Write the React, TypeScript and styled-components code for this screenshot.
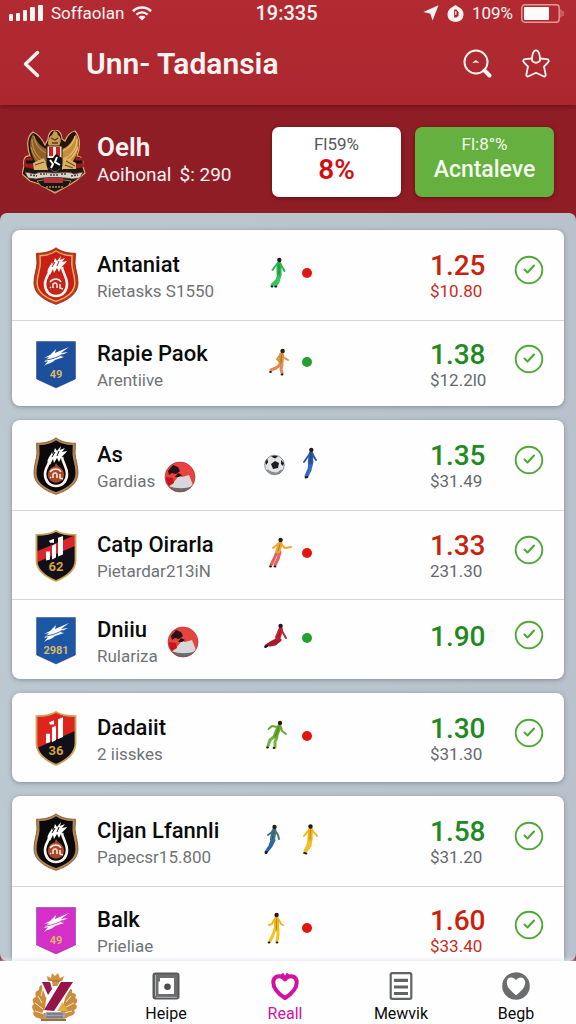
import React from 'react';
import styled, { createGlobalStyle } from 'styled-components';

const GlobalStyle = createGlobalStyle`
  *, *::before, *::after { box-sizing: border-box; }
  body { margin: 0; background: #8f1d26; font-family: Roboto, "Liberation Sans", sans-serif; }
  button { font-family: inherit; border: 0; padding: 0; background: none; cursor: pointer; }
  svg { display: block; }
`;

const Shell = styled.div`
  display: flex;
  flex-direction: column;
  height: 100vh;
  background: #8f1d26;
  color: #0b0b0c;
`;

const TopBar = styled.header`
  flex: none;
  background: linear-gradient(#b22a32, #ab272e);
  color: #fff3f1;
  box-shadow: 0 1px 5px rgba(70, 0, 8, 0.6);
`;

const StatusBar = styled.div`
  display: grid;
  grid-template-columns: 1fr auto 1fr;
  align-items: center;
  height: 26px;
  padding: 0 12px 0 9px;
  font-size: 17px;
  line-height: 24px;
`;

const StatusGroup = styled.div<{ $end?: boolean }>`
  display: flex;
  align-items: center;
  gap: 8px;
  justify-content: ${(p) => (p.$end ? 'flex-end' : 'flex-start')};
`;

const Clock = styled.time`
  font-size: 20px;
  font-weight: 500;
`;

const TitleRow = styled.div`
  display: flex;
  align-items: center;
  height: 79px;
  padding: 0 26px 4px 22px;
`;

const IconButton = styled.button`
  display: grid;
  place-items: center;
  flex: none;
  color: inherit;
`;

const Title = styled.h1`
  flex: 1;
  margin: 0 0 0 44px;
  font-size: 30px;
  line-height: 36px;
  font-weight: 600;
  white-space: nowrap;
`;

const Actions = styled.div`
  display: flex;
  gap: 30px;
`;

const Hero = styled.section`
  flex: none;
  display: flex;
  align-items: center;
  gap: 14px;
  height: 108px;
  padding: 6px 22px 0 22px;
  color: #fff3f1;
`;

const HeroText = styled.div`
  flex: 1;
  min-width: 0;
  margin-left: -3px;
  padding-bottom: 3px;
  white-space: nowrap;
`;

const HeroName = styled.h2`
  margin: 0;
  font-size: 26px;
  line-height: 28px;
  font-weight: 600;
`;

const HeroMeta = styled.p`
  display: flex;
  gap: 8px;
  margin: 0;
  font-size: 19px;
  line-height: 28px;
`;

const Tile = styled.button<{ $green?: boolean }>`
  flex: none;
  display: flex;
  flex-direction: column;
  align-items: center;
  justify-content: center;
  width: ${(p) => (p.$green ? '139px' : '129px')};
  height: 70px;
  padding-bottom: 4px;
  border-radius: 7px;
  background: ${(p) => (p.$green ? '#66b040' : '#ffffff')};
  color: ${(p) => (p.$green ? '#f4fbef' : '#d00f12')};
  box-shadow: 0 1px 4px rgba(60, 0, 6, 0.55);
`;

const TileTop = styled.span<{ $muted?: boolean }>`
  font-size: 17px;
  line-height: 20px;
  color: ${(p) => (p.$muted ? '#55585c' : 'inherit')};
`;

const TileMain = styled.span<{ $big?: boolean }>`
  font-size: ${(p) => (p.$big ? '28px' : '23px')};
  line-height: 32px;
  font-weight: ${(p) => (p.$big ? 600 : 500)};
`;

const Main = styled.main`
  flex: 1;
  min-height: 0;
  display: flex;
  flex-direction: column;
  gap: 14px;
  padding: 17px 12px;
  overflow-y: auto;
  scrollbar-width: none;
  border-radius: 7px;
  background: linear-gradient(90deg, #bcc8d0, #b9c5cd 50%, #b8c1cc);
`;

const Card = styled.ul`
  flex: none;
  margin: 0;
  padding: 0;
  list-style: none;
  background: #fefefe;
  border-radius: 8px;
  box-shadow: 0 1px 4px rgba(70, 85, 100, 0.5);
`;

const sizes = { tall: 90, medium: 89, regular: 86, compact: 80 };
type Size = keyof typeof sizes;

const Row = styled.li<{ $size: Size }>`
  display: grid;
  grid-template-columns: 48px minmax(0, 152fr) minmax(0, 150fr) 68px 30px;
  column-gap: 16px;
  align-items: center;
  min-height: ${(p) => sizes[p.$size]}px;
  padding: 0 20px;
  & + & { border-top: 1px solid #d3d5d8; }
`;

const CrestSlot = styled.div`
  display: grid;
  place-items: center;
  padding-top: 2px;
`;

const Team = styled.div<{ $center?: boolean }>`
  display: flex;
  align-items: ${(p) => (p.$center ? 'center' : 'flex-end')};
  gap: 9px;
  padding: 4px 0 0 1px;
  white-space: nowrap;
`;

const Name = styled.h3`
  margin: 0;
  font-size: 22px;
  line-height: 28px;
  font-weight: 500;
  color: #0b0b0c;
`;

const Sub = styled.p`
  margin: 0;
  font-size: 17px;
  line-height: 24px;
  color: #707376;
`;

const Players = styled.div`
  display: grid;
  grid-template-columns: 28px auto;
  justify-content: start;
  align-items: center;
  column-gap: 10px;
  padding-bottom: 4px;
`;

const Dot = styled.span<{ $tone: Tone }>`
  width: 10px;
  height: 10px;
  border-radius: 50%;
  background: ${(p) => (p.$tone === 'red' ? '#e0160f' : '#23a02d')};
`;

const Quote = styled.div<{ $single?: boolean }>`
  padding: ${(p) => (p.$single ? '0 0 6px' : '6px 0 0')};
  white-space: nowrap;
`;

const Odds = styled.strong<{ $tone: Tone }>`
  display: block;
  font-size: 28px;
  line-height: 26px;
  font-weight: 500;
  color: ${(p) => (p.$tone === 'red' ? '#cc1f0d' : '#208a1e')};
`;

const Price = styled.span<{ $tone: Tone | 'grey' }>`
  display: block;
  font-size: 17px;
  line-height: 24px;
  color: ${(p) => (p.$tone === 'red' ? '#c92a1c' : '#66696c')};
`;

const CheckButton = styled(IconButton)`
  margin-bottom: 10px;
  color: #4fa838;
`;

const Nav = styled.nav`
  flex: none;
  display: grid;
  grid-template-columns: 108fr 116fr 122fr 110fr 120fr;
  height: 63px;
  background: #fefefe;
  box-shadow: 0 -1px 5px rgba(225, 230, 236, 0.95);
  position: relative;
`;

const NavLink = styled.a<{ $active?: boolean }>`
  display: flex;
  flex-direction: column;
  align-items: center;
  padding-top: 11px;
  gap: 4px;
  text-decoration: none;
  font-size: 16px;
  line-height: 20px;
  color: ${(p) => (p.$active ? '#d012a4' : '#0b0b0c')};
`;

type Tone = 'red' | 'green';

/* ---------- Icons ---------- */

const SignalIcon = () => (
  <svg width="34" height="16" viewBox="0 0 34 16" fill="currentColor">
    <rect x="0" y="9" width="4" height="7" rx="1" />
    <rect x="7" y="8" width="4" height="8" rx="1" />
    <rect x="14" y="5" width="4" height="11" rx="1" />
    <rect x="21" y="2" width="5" height="14" rx="1" />
    <rect x="29" y="0" width="5" height="16" rx="1" />
  </svg>
);

const WifiIcon = () => (
  <svg width="20" height="15" viewBox="0 0 20 15" fill="none" stroke="currentColor" strokeWidth="2.6">
    <path d="M1 5.2C6 .3 14 .3 19 5.2" />
    <path d="M4.4 8.6c3.2-3 8-3 11.2 0" strokeWidth="2.2" />
    <path d="M10 14.6 6.4 11c2-1.8 5.200-1.800 7.200 0z" fill="currentColor" stroke="none" />
  </svg>
);

const LocationIcon = () => (
  <svg width="16" height="16" viewBox="0 0 16 16" fill="currentColor">
    <path d="M15.500 0.300 0.300 7l6.900 1.500L9.600 15.500z" />
  </svg>
);

const AlarmIcon = () => (
  <svg width="17" height="17" viewBox="0 0 17 17">
    <path d="M5.500 2 8.500 0l3 2c3 1.300 5 4 5 7.200 0 4.500-3 7.600-8 7.600S.5 13.700.5 9.200C.5 6 2.500 3.300 5.500 2z" fill="currentColor" />
    <path d="M7.200 4.600h2.300l2 2.600v3.600L9.300 12.600H7.200z" fill="#a3242b" />
    <path d="M8.800 6.200v3.600" stroke="currentColor" strokeWidth="1.300" />
  </svg>
);

const BatteryIcon = () => (
  <svg width="43" height="19" viewBox="0 0 43 19">
    <rect x="0.800" y="0.800" width="37.400" height="17.400" rx="3" fill="none" stroke="#e79a9a" strokeWidth="1.400" />
    <rect x="3" y="3" width="25" height="13" rx="1" fill="#fffafa" />
    <path d="M40 5.500v8M42 7v5" stroke="#d97e80" strokeWidth="1.200" />
  </svg>
);

const BackIcon = () => (
  <svg width="20" height="28" viewBox="0 0 20 28" fill="none" stroke="currentColor" strokeWidth="3.400" strokeLinecap="round" strokeLinejoin="round">
    <path d="M15.500 2.500 3.500 14l12 11.500" />
  </svg>
);

const SearchIcon = () => (
  <svg width="29" height="29" viewBox="0 0 29 29" fill="none" stroke="currentColor">
    <circle cx="13" cy="13" r="11.500" strokeWidth="2" />
    <path d="m21.500 21.500 5 5" strokeWidth="4" strokeLinecap="round" />
    <path d="M9.500 14.200c.4-1.600 1.600-1.700 2-2.300.700-1 2.300-.8 2.500.3 1 .1 1.700.8 1.800 2-1.800-.8-4.300-.8-6.300 0z" fill="currentColor" stroke="none" />
  </svg>
);

const StarIcon = () => (
  <svg width="28" height="29" viewBox="0 0 28 29" fill="none" stroke="currentColor" strokeWidth="1.800" strokeLinejoin="round" strokeLinecap="round">
    <path d="M10 11C9.800 5.500 11.500 1.300 14 1.300S18.200 5.500 18 11" />
    <path d="M9.800 9.500 3.200 10.200c-2 .2-2.600 1.800-1.200 3.200l4 4.200-1.600 7.600c-.4 1.800.6 2.800 2.200 2l7.400-3.400 7.400 3.400c1.600.8 2.600-.2 2.200-2L22 17.600l4-4.200c1.400-1.400.8-3-1.200-3.200L18.200 9.500" />
    <path d="M10 11.500c2 3 6 3 8 0" />
  </svg>
);

const CheckIcon = () => (
  <svg width="30" height="30" viewBox="0 0 30 30" fill="none" stroke="currentColor" strokeLinecap="round" strokeLinejoin="round">
    <circle cx="15" cy="15" r="13.300" strokeWidth="1.900" />
    <path d="m10.500 14.600 3 2.900 6.500-7" strokeWidth="2.100" />
  </svg>
);

const FrameIcon = () => (
  <svg width="28" height="28" viewBox="0 0 28 28">
    <rect x="1.500" y="1.500" width="25" height="25" rx="2" fill="#6d6e70" stroke="#58595b" strokeWidth="2" />
    <path d="M3.500 3v21M4 25.300H25" stroke="#b5b6b8" strokeWidth="1" />
    <path d="M8 6h14v16H6.500V9.500H8z" fill="#fff" />
    <circle cx="15.500" cy="14.800" r="3.300" fill="#4c4d4f" />
  </svg>
);

const HeartIcon = () => (
  <svg width="28" height="28" viewBox="0 0 28 28">
    <path d="M14 26C6 21 2.300 16 2.300 10.500c0-6.500 7-8.500 11.700-3.200 4.700-5.300 11.700-3.300 11.700 3.200C25.700 16 22 21 14 26z" fill="#fff" stroke="#d012a4" strokeWidth="4" strokeLinejoin="round" />
    <path d="M11 1.500 14 6l3-4.500" fill="none" stroke="#d012a4" strokeWidth="2.600" />
  </svg>
);

const ListIcon = () => (
  <svg width="24" height="28" viewBox="0 0 24 28" fill="none" stroke="#626365">
    <rect x="1.700" y="1.200" width="20.600" height="25.600" rx="1.500" strokeWidth="2.200" />
    <path d="M5 8.300h14M5 15h14M5 21.500h14" strokeWidth="3.200" />
  </svg>
);

const HeartBadgeIcon = () => (
  <svg width="30" height="28" viewBox="0 0 30 29">
    <circle cx="15" cy="14.500" r="14.300" fill="#6b6c6e" />
    <path d="M15 24C8 18.500 5.500 15 5.500 10.500c0-5.300 6.500-6.800 9.500-2 3-4.800 9.500-3.300 9.500 2C24.500 15 22 18.500 15 24z" fill="#fefefe" />
  </svg>
);

/* ---------- Emblems ---------- */

const GarudaEmblem = () => (
  <svg width="64" height="64" viewBox="0 0 64 64" role="img" aria-label="Club emblem">
    <path d="M11 2C4 7 5 18 8 26c-6-1-7 5-6 10l-2 8 8 7 9 3 16 9 16-9 6-4 8-7-2-6c1-6-1-11-6-11 3-8 4-18-2-25-5 1-8 5-10 10L40 9c0-5-3-9-7-9s-7 4-7 9l-3 6C20 9 16 4 11 2z" fill="#24160f" stroke="#e2a86b" strokeWidth="1.200" />
    <path d="M11 4C6 12 8 24 15 34l10 6V19C18 17 14 10 11 4z" fill="#8d5f2a" />
    <path d="M10 9c0 10 5 19 14 23M9 17c2 9 7 15 14 19M12 6c1 8 6 14 12 17" stroke="#c4913f" strokeWidth="1.100" fill="none" />
    <path d="M54 4c5 8 3 20-5 30l-9 6V19c7-2 11-9 14-15z" fill="#c58f3b" />
    <path d="M55 9c0 9-5 17-14 20M56 17c-3 8-7 13-14 16M53 6c-1 7-6 12-12 15" stroke="#e8c26e" strokeWidth="1.300" fill="none" />
    <path d="M27 16c-2-3-1-9 3-11l2-4 3 1 1 3c4 2 3 8 1 11z" fill="#c69a4f" />
    <path d="M29 8l4 2 3-2M30 13h6" stroke="#5c3b16" strokeWidth="1.300" fill="none" />
    <path d="M3 28l7-1 3 12-11-2zM61 28l-7-1-3 12 11-2z" fill="#9c1b1e" />
    <path d="M4 32h8M52 32h8" stroke="#111" strokeWidth="3" />
    <path d="M25 16h15v21l-7 6-8-6z" fill="#f4ead9" stroke="#3a1a12" />
    <path d="M27 17h4v9h-4zM34 17h4v9h-4z" fill="#c3202a" />
    <path d="M25 28h6l3-4 6 4v9l-7 5-8-5z" fill="#101114" />
    <path d="M28 30l3 4-2 4M35 27l-2 5 5 3" stroke="#fff" strokeWidth="2" fill="none" />
    <path d="M11 33l11-5 4 12H12zM54 33l-12-6-2 12h14z" fill="#d9b468" />
    <path d="M13 35l9-3M44 31l9 5M43 35l8 3" stroke="#6e4a1b" strokeWidth="1.200" />
    <path d="M3 42l10 2c6-3 10-1 19-1s14-2 20 1l9-2-3 6-8 1c-9-2-27-2-36 0l-8-1z" fill="#d8d2cb" stroke="#50403a" strokeWidth="0.800" />
    <path d="M8 45l7 1M18 44h7M28 45h8M39 44h6M49 46l7-1" stroke="#4b4342" strokeWidth="1.600" strokeDasharray="2 1" />
    <path d="M15 51c10-2 24-2 34 0l-3 5-13 6-14-6z" fill="#191510" stroke="#c9974d" strokeWidth="0.800" />
    <path d="M22 48h19v5H22z" fill="#b2323c" />
    <path d="M24 57h17" stroke="#b48a50" strokeWidth="1.600" strokeDasharray="2 1" />
  </svg>
);

const LaurelEmblem = () => (
  <svg width="50" height="50" viewBox="0 0 50 50" role="img" aria-label="Home">
    <path d="M18 4l4 2 1-5 3 3 3-3 2 5 4-2-2 6-2 4H22l-3-4z" fill="#cf9440" />
    <path d="M20 9h12" stroke="#a86f2c" strokeWidth="1.200" />
    <path d="M15 12c-4 0-5 3-5 6-4 1-4 4-3 7-4 1-4 4-2 7-3 2-2 5 0 7-2 3 0 6 4 7l7 2 3-4-3-9 2-12z" fill="#c98d3d" />
    <path d="M14 16l-2 8M9 24l4 7M6 31l8 6M6 39l9 3" stroke="#f7e3bf" strokeWidth="1" />
    <path d="M39 17c3-1 5 0 4 4 4 0 5 2 3 5 3 1 3 4 0 6 3 2 2 5-1 6 2 3 0 5-4 6l-8 4-3-4 5-14z" fill="#c98d3d" />
    <path d="M42 24l-5 6M45 31l-8 4M43 39l-8 2" stroke="#f7e3bf" strokeWidth="1" />
    <path d="M31 26l8 13H21z" fill="#e5ac42" />
    <path d="M11 9h12l1 8-3 6-4 3z" fill="#fff" />
    <path d="M13 10h8l2 7-4 6z" fill="#9a184c" />
    <path d="M31 9h15L27 41H13z" fill="#fff" />
    <path d="M32 10h12L25 39l-10-1z" fill="#951549" />
    <path d="M17 40h19v8H14z" fill="#a4a3aa" />
    <path d="M18 42h16M17 45h17" stroke="#5e5c66" strokeWidth="1.200" />
    <path d="M12 48h25" stroke="#a66e34" strokeWidth="2" />
  </svg>
);

const FlameCrest = ({ dark }: { dark?: boolean }) => {
  const field = dark ? '#0b0909' : '#c81f17';
  const rim = dark ? '#b48654' : '#b83b1c';
  return (
    <svg width="46" height="58" viewBox="0 0 46 58" role="img" aria-label="Club crest">
      <path d="M23 .8c5 4 12 5.500 19.500 5.500L42 16c0 5 3 12 3 20 0 10-9 17-22 21.300C10 53 1 46 1 36c0-8 3-15 3-20L3.500 6.300C11 6.300 18 4.800 23 .8z" fill={rim} stroke={dark ? '#8c6239' : '#a92c17'} strokeWidth="1" />
      <path d="M23 4c5 3.400 10 4.500 16 4.700L38.800 17c.2 6 3 11 3 19 0 8-7.500 14.500-18.800 18.300C11.700 50.500 4.200 44 4.200 36c0-8 2.800-13 3-19L7 8.700C13 8.500 18 7.400 23 4z" fill={field} stroke={dark ? '#0b0909' : '#efb066'} strokeWidth="1.400" />
      <path d="M18 20c-1 7-6 10-6 17 0 7 4.500 12 11 12s11-5 11-12c0-7-4-10-5-17" fill="none" stroke="#fff6f0" strokeWidth="2.600" />
      <path d="M14.500 25c0-4 3-6 4.500-10l1 3 2-7 2 3 4-5-1 4 5-2-3 4 5-1c-2 3-4 4-6 7l-2 4-2-4-3 5-1-4-3 6z" fill="#fff" />
      <path d="M22 15l-3 5M26 14l-2 5" stroke={field} strokeWidth="1" />
      <circle cx="23" cy="37.500" r="8.200" fill={dark ? '#a8492a' : '#bd2a20'} />
      <path d="M23 26l6 9-10 1z" fill={dark ? '#a8492a' : '#bd2a20'} />
      <path d="M17 35c3-4 9-4 11 0M20 41v-4c2-2 4-1 4 1v3M27 37v4l3 1M18 40l-1 1" fill="none" stroke="#ffe9df" strokeWidth="1.500" />
    </svg>
  );
};

const PennantCrest = ({ color, digits }: { color: string; digits: string }) => (
  <svg width="40" height="48" viewBox="0 0 40 48" role="img" aria-label="Club crest">
    <path d="M.5.5h39v37.500L20 47 .5 38z" fill={color} stroke="rgba(20,30,90,.35)" />
    <path d="M14 14 20 8l-1 4 14-6-8 6 7-1-8 4 4 1-9 3c-4 4-7 3-11 6l4-5-4 1 5-5-5 1z" fill="#fdfdff" />
    <path d="M10 19c7-1 12-3 17-6" stroke={color} strokeWidth="0.900" fill="none" />
    <text x="20" y="37" textAnchor="middle" fontFamily="Roboto, sans-serif" fontWeight="700" fontSize="11" fill="#dcb766">{digits}</text>
  </svg>
);

const BarsCrest = ({ redTop, digits }: { redTop?: boolean; digits: string }) => (
  <svg width="42" height={redTop ? 55 : 52} viewBox="0 0 42 53" preserveAspectRatio="none" role="img" aria-label="Club crest">
    <path d="M21 1c5 3 11 4 19.500 4v26c0 10-8 16-19.500 21C9.500 47 1.500 41 1.500 31V5C10 5 16 4 21 1z" fill="#11101a" />
    {redTop
      ? <path d="M21 1c5 3 11 4 19.500 4v14L1.500 36V5C10 5 16 4 21 1z" fill="#dd241f" />
      : <path d="M1.500 22 40.500 5v11L1.500 33z" fill="#d9262b" />}
    <path d="M21 1c5 3 11 4 19.500 4v26c0 10-8 16-19.500 21C9.500 47 1.500 41 1.500 31V5C10 5 16 4 21 1z" fill="none" stroke="#cda455" strokeWidth="1.800" />
    <path d="M11 22h4v8l-4 1zM17 16l4-2v14l-4 2zM23 8l5-2v19l-5 2z" fill="#fff" />
    <path d="M14 11l5-2v4h-4z" fill="#fff" />
    <text x="21" y="42" textAnchor="middle" fontFamily="Roboto, sans-serif" fontWeight="700" fontSize="13" fill="#d7a437">{digits}</text>
  </svg>
);

const RedBall = () => (
  <svg width="32" height="32" viewBox="0 0 32 32" aria-hidden="true">
    <circle cx="16" cy="16" r="15" fill="#e8433f" />
    <path d="M9 22 15 15l3 1 7-2 4 10c-3 5-8 7-13 7-5 0-9-2-11-6z" fill="#d8d8da" />
    <path d="M5 25c6 3 18 3 23 0-3 4-7 6-12 6s-9-2-11-6z" fill="#6a6b70" />
    <path d="M4 10l5-6 5 2 2 4-4 3-4-1-3 2zM11 16l3-4 4 2-3 2z" fill="#2a1113" />
    <path d="M2 16l7 1 1 5-5 3c-2-2-3-5-3-9z" fill="#c8141b" />
    <circle cx="16" cy="16" r="15" fill="none" stroke="#a8282b" strokeWidth="0.600" />
  </svg>
);

const Football = () => (
  <svg width="22" height="32" viewBox="0 0 22 32" aria-hidden="true">
    <circle cx="10.500" cy="18" r="9.800" fill="#e3e4e6" stroke="#77797c" strokeWidth="0.800" />
    <path d="M7 17l4-3 4 2-1 5-5 1zM7 9.500l4-1 3 1-3 2zM1.200 15l2-3 1 3-2 3zM20 16l-3-3v4l2 2zM6 25l4 .5 1 2-4-1zM15 24l3-1-2 3-2 1z" fill="#1b1c1f" />
    <path d="M3 23c4 4 11 5 15 0" stroke="#8a8d91" strokeWidth="1.800" fill="none" />
  </svg>
);

/* ---------- Athlete figures ---------- */

type Pose = {
  shirt: string;
  shorts: string;
  head: [number, number];
  torso: string;
  arms: string;
  legs: string;
  feet: [number, number][];
};

const poses: Record<string, Pose> = {
  green: { shirt: '#27b450', shorts: '#35c558', head: [15.3, 3], torso: 'M15 7 15 17', arms: 'M13 7 8.500 13M17 8l3.500 6', legs: 'M15 17l-2 6-5 5M16 18l-2 7-3 4', feet: [[8, 29.500], [12, 29.500]] },
  orange: { shirt: '#d9913a', shorts: '#e5855a', head: [18.600, 5], torso: 'M17.500 9 17 17', arms: 'M16 9l-3 4 2 2M19 11l5 3', legs: 'M17 18l-5 4-5 2M18 19l-1 4 1 4', feet: [[6.500, 26], [18, 28.500]] },
  blue: { shirt: '#2b55a6', shorts: '#3568c4', head: [9.300, 3], torso: 'M9 7 8.500 15', arms: 'M7 8 2 15M11 8l3 5', legs: 'M8 15l-1 7-3 7M10 15l-2 8-3 6', feet: [[4, 30.500], [5, 30]] },
  coral: { shirt: '#efa62b', shorts: '#e2605c', head: [16.600, 3], torso: 'M16 7 14 14', arms: 'M14 7l-5 4M18 8l3 3 6-1', legs: 'M13 15l-3 7-3 6M16 15l-2 7-3 6', feet: [[6.500, 29.500], [11, 29.500]] },
  maroon: { shirt: '#c0202f', shorts: '#a81a2b', head: [16.600, 4], torso: 'M16.500 8 14 16', arms: 'M15 9l-3 6M18 9l4 7', legs: 'M14 17l-6 3-6 4M16 18l-5 4-5 1', feet: [[1.500, 25], [3, 24]] },
  lime: { shirt: '#63a92c', shorts: '#74b53a', head: [16, 3], torso: 'M15 7 11.500 16', arms: 'M13 7 8 6 4.500 9M17 7l1 4 4 3', legs: 'M11 16l-5 4-2 6M13 17l-2 5 0 5', feet: [[3.500, 27.500], [10, 28]] },
  teal: { shirt: '#3d7482', shorts: '#2566a8', head: [10.500, 4], torso: 'M10 8 8.500 16', arms: 'M8 9l-4 3M12 9l2 3 1 4', legs: 'M8 17l-2 6-4 6M10 17l-3 6-4 5', feet: [[2, 30], [2.500, 29]] },
  gold: { shirt: '#ecb51b', shorts: '#f2c02a', head: [8.500, 3.500], torso: 'M8.500 7 8 16', arms: 'M6 8l-4 5M11 8l4 5', legs: 'M7 16l-1 6-3 6M9 16l-1 7-4 5', feet: [[2.500, 30], [4, 30.500]] },
  yellow: { shirt: '#edb61d', shorts: '#f4c321', head: [12.600, 3], torso: 'M12.500 7V17', arms: 'M10 8l-2 4-3 1M15 8l2 4 2 1', legs: 'M11 17l-2 6-3 6M14 17v6l-1 6', feet: [[5, 30.500], [13, 30.500]] },
};

const Athlete = ({ kit }: { kit: keyof typeof poses }) => {
  const p = poses[kit];
  return (
    <svg width="28" height="32" viewBox="0 0 28 32" fill="none" strokeLinecap="round" strokeLinejoin="round" aria-hidden="true">
      <path d={p.arms} stroke={p.shirt} strokeWidth="1.900" />
      <path d={p.legs} stroke={p.shorts} strokeWidth="3" />
      <path d={p.torso} stroke={p.shirt} strokeWidth="5" />
      <path d={p.torso} stroke="rgba(60,20,10,.3)" strokeWidth="1" />
      <circle cx={p.head[0]} cy={p.head[1]} r="2.200" fill="#2a1a14" />
      {p.feet.map(([x, y]) => <ellipse key={x} cx={x} cy={y} rx="1.400" ry="1" fill="#1d1a18" />)}
    </svg>
  );
};

/* ---------- Data ---------- */

type Entry = {
  size: Size;
  crest: React.ReactNode;
  name: string;
  sub: string;
  ball?: 'end' | 'center';
  marks: [React.ReactNode, React.ReactNode];
  odds: string;
  tone: Tone;
  price?: string;
  priceTone?: Tone;
};

const groups: Entry[][] = [
  [
    { size: 'tall', crest: <FlameCrest />, name: 'Antaniat', sub: 'Rietasks S1550', marks: [<Athlete kit="green" />, <Dot $tone="red" />], odds: '1.25', tone: 'red', price: '$10.80', priceTone: 'red' },
    { size: 'regular', crest: <PennantCrest color="#1c4f9c" digits="49" />, name: 'Rapie Paok', sub: 'Arentiive', marks: [<Athlete kit="orange" />, <Dot $tone="green" />], odds: '1.38', tone: 'green', price: '$12.2l0' },
  ],
  [
    { size: 'tall', crest: <FlameCrest dark />, name: 'As', sub: 'Gardias', ball: 'end', marks: [<Football />, <Athlete kit="blue" />], odds: '1.35', tone: 'green', price: '$31.49' },
    { size: 'medium', crest: <BarsCrest digits="62" />, name: 'Catp Oirarla', sub: 'Pietardar213iN', marks: [<Athlete kit="coral" />, <Dot $tone="red" />], odds: '1.33', tone: 'red', price: '231.30' },
    { size: 'compact', crest: <PennantCrest color="#1c57a6" digits="2981" />, name: 'Dniiu', sub: 'Rulariza', ball: 'center', marks: [<Athlete kit="maroon" />, <Dot $tone="green" />], odds: '1.90', tone: 'green' },
  ],
  [
    { size: 'medium', crest: <BarsCrest redTop digits="36" />, name: 'Dadaiit', sub: '2 iisskes', marks: [<Athlete kit="lime" />, <Dot $tone="red" />], odds: '1.30', tone: 'green', price: '$31.30' },
  ],
  [
    { size: 'tall', crest: <FlameCrest dark />, name: 'Cljan Lfannli', sub: 'Papecsr15.800', marks: [<Athlete kit="teal" />, <Athlete kit="gold" />], odds: '1.58', tone: 'green', price: '$31.20' },
    { size: 'regular', crest: <PennantCrest color="#d62fc8" digits="49" />, name: 'Balk', sub: 'Prieliae', marks: [<Athlete kit="yellow" />, <Dot $tone="red" />], odds: '1.60', tone: 'red', price: '$33.40', priceTone: 'red' },
  ],
];

const EntryRow = ({ entry }: { entry: Entry }) => (
  <Row $size={entry.size}>
    <CrestSlot>{entry.crest}</CrestSlot>
    <Team $center={entry.ball === 'center'}>
      <div>
        <Name>{entry.name}</Name>
        <Sub>{entry.sub}</Sub>
      </div>
      {entry.ball && <RedBall />}
    </Team>
    <Players>
      {entry.marks[0]}
      {entry.marks[1]}
    </Players>
    <Quote $single={!entry.price}>
      <Odds $tone={entry.tone}>{entry.odds}</Odds>
      {entry.price && <Price $tone={entry.priceTone ?? 'grey'}>{entry.price}</Price>}
    </Quote>
    <CheckButton type="button" aria-label={`Select ${entry.name}`}><CheckIcon /></CheckButton>
  </Row>
);

export default function App() {
  return (
    <Shell>
      <GlobalStyle />
      <TopBar>
        <StatusBar>
          <StatusGroup>
            <SignalIcon />
            <span>Soffaolan</span>
            <WifiIcon />
          </StatusGroup>
          <Clock>19:335</Clock>
          <StatusGroup $end>
            <LocationIcon />
            <AlarmIcon />
            <span>109%</span>
            <BatteryIcon />
          </StatusGroup>
        </StatusBar>
        <TitleRow>
          <IconButton type="button" aria-label="Back"><BackIcon /></IconButton>
          <Title>Unn- Tadansia</Title>
          <Actions>
            <IconButton type="button" aria-label="Search"><SearchIcon /></IconButton>
            <IconButton type="button" aria-label="Favourite"><StarIcon /></IconButton>
          </Actions>
        </TitleRow>
      </TopBar>
      <Hero>
        <GarudaEmblem />
        <HeroText>
          <HeroName>Oelh</HeroName>
          <HeroMeta><span>Aoihonal</span><span>$: 290</span></HeroMeta>
        </HeroText>
        <Tile type="button">
          <TileTop $muted>Fl59%</TileTop>
          <TileMain $big>8%</TileMain>
        </Tile>
        <Tile type="button" $green>
          <TileTop>Fl:8°%</TileTop>
          <TileMain>Acntaleve</TileMain>
        </Tile>
      </Hero>
      <Main>
        {groups.map((group, i) => (
          <Card key={i}>
            {group.map((entry) => <EntryRow key={entry.name} entry={entry} />)}
          </Card>
        ))}
      </Main>
      <Nav>
        <NavLink href="#home"><LaurelEmblem /></NavLink>
        <NavLink href="#heipe"><FrameIcon />Heipe</NavLink>
        <NavLink href="#reall" $active><HeartIcon />Reall</NavLink>
        <NavLink href="#mewvik"><ListIcon />Mewvik</NavLink>
        <NavLink href="#begb"><HeartBadgeIcon />Begb</NavLink>
      </Nav>
    </Shell>
  );
}
